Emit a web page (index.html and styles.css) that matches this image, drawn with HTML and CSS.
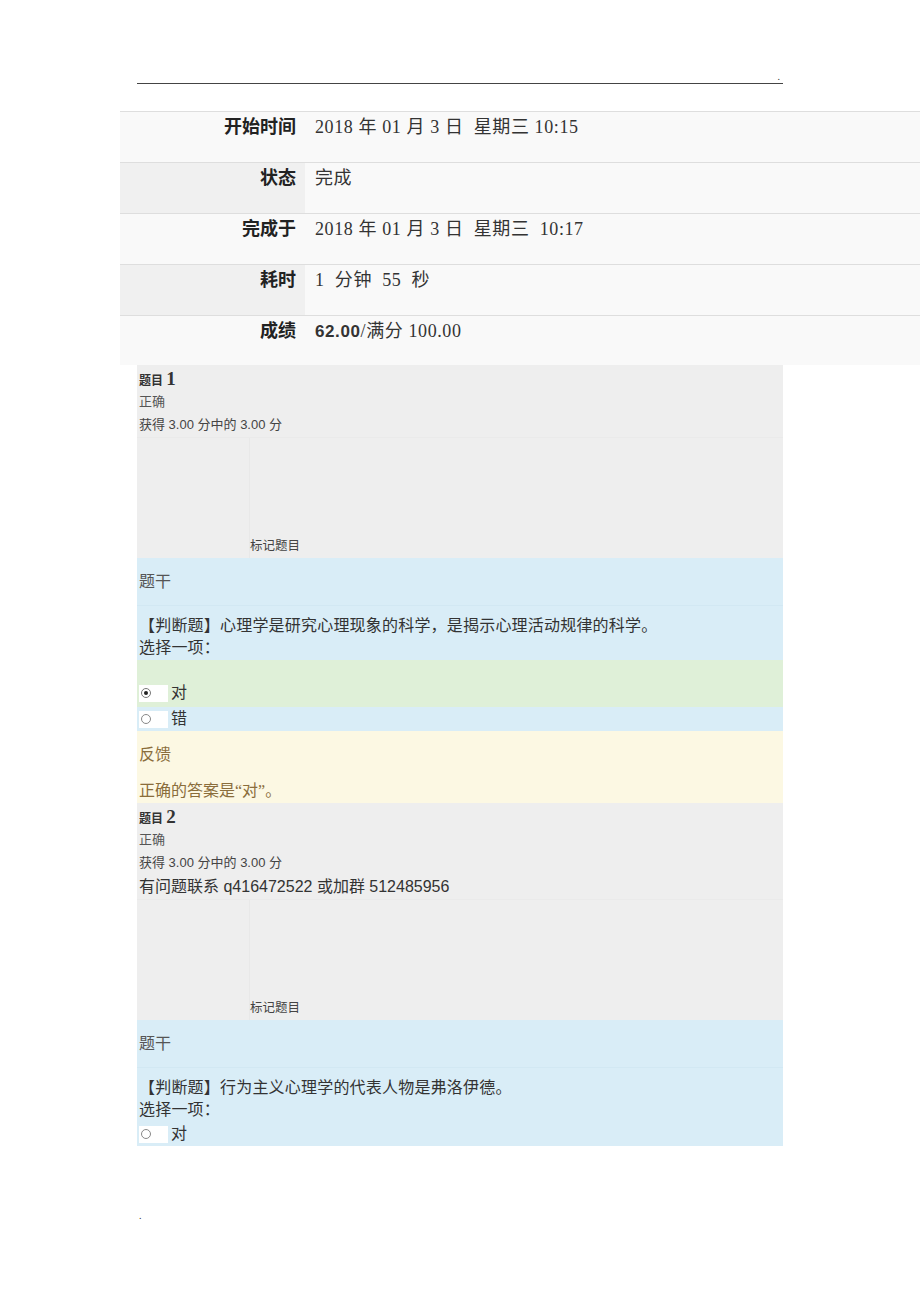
FILE: index.html
```html
<!DOCTYPE html>
<html lang="zh-CN">
<head>
  <meta charset="UTF-8">
  <meta name="viewport" content="width=device-width, initial-scale=1.0">
  <title>测验回顾</title>
  <link rel="stylesheet" href="styles.css">
</head>
<body>
  <div class="page-head"><span class="dot">.</span></div>

  <div class="summary">
    <div class="summary-row">
      <div class="cell-label">开始时间</div>
      <div class="cell-value">2018 年 01 月 3 日&nbsp; 星期三 10:15</div>
    </div>
    <div class="summary-row alt">
      <div class="cell-label">状态</div>
      <div class="cell-value">完成</div>
    </div>
    <div class="summary-row">
      <div class="cell-label">完成于</div>
      <div class="cell-value">2018 年 01 月 3 日&nbsp; 星期三&nbsp; 10:17</div>
    </div>
    <div class="summary-row alt">
      <div class="cell-label">耗时</div>
      <div class="cell-value">1&nbsp; 分钟&nbsp; 55&nbsp; 秒</div>
    </div>
    <div class="summary-row last">
      <div class="cell-label">成绩</div>
      <div class="cell-value"><b>62.00</b>/满分 100.00</div>
    </div>
  </div>

  <div class="que">
    <div class="info">
      <div class="qno">题目 <b>1</b></div>
      <div class="state">正确</div>
      <div class="grade">获得 3.00 分中的 3.00 分</div>
      <div class="flag-area">
        <div class="flag">标记题目</div>
      </div>
    </div>
    <div class="content">
      <div class="prompt-head">题干</div>
      <div class="qtext">
        <div>【判断题】心理学是研究心理现象的科学，是揭示心理活动规律的科学。</div>
        <div>选择一项：</div>
      </div>
    </div>
    <div class="opt correct">
      <span class="radio">
        <svg width="12" height="12" viewBox="0 0 12 12"><circle cx="6" cy="6" r="4.5" fill="#fff" stroke="#777" stroke-width="1"/><circle cx="6" cy="6" r="2" fill="#222"/></svg>
      </span>对
    </div>
    <div class="opt">
      <span class="radio">
        <svg width="12" height="12" viewBox="0 0 12 12"><circle cx="6" cy="6" r="4.5" fill="#fff" stroke="#888" stroke-width="1"/></svg>
      </span>错
    </div>
    <div class="feedback">
      <div class="fb-head">反馈</div>
      <div class="fb-text">正确的答案是“对”。</div>
    </div>
  </div>

  <div class="que">
    <div class="info">
      <div class="qno">题目 <b>2</b></div>
      <div class="state">正确</div>
      <div class="grade">获得 3.00 分中的 3.00 分</div>
      <div class="contact">有问题联系 q416472522 或加群 512485956</div>
      <div class="flag-area">
        <div class="flag">标记题目</div>
      </div>
    </div>
    <div class="content">
      <div class="prompt-head">题干</div>
      <div class="qtext">
        <div>【判断题】行为主义心理学的代表人物是弗洛伊德。</div>
        <div>选择一项：</div>
      </div>
      <div class="opt plain">
        <span class="radio">
          <svg width="12" height="12" viewBox="0 0 12 12"><circle cx="6" cy="6" r="4.5" fill="#fff" stroke="#888" stroke-width="1"/></svg>
        </span>对
      </div>
    </div>
  </div>

  <div class="page-foot">.</div>
</body>
</html>
```

FILE: styles.css
```css
body {
  margin: 0;
  padding: 0;
  background: #fff;
  color: #333;
  font-family: "Liberation Serif", "Noto Sans CJK SC", serif;
}
.page-head {
  width: 646px;
  height: 83px;
  margin-left: 137px;
  border-bottom: 1px solid #444;
  display: flex;
  justify-content: flex-end;
  align-items: flex-end;
}
.page-head .dot {
  font-size: 10px;
  line-height: 8px;
  padding-right: 3px;
  padding-bottom: 2px;
  color: #333;
}
.summary {
  margin-left: 120px;
  margin-top: 27px;
}
.summary-row {
  display: grid;
  grid-template-columns: 185px 1fr;
  height: 50px;
  border-top: 1px solid #dedede;
  background: #f9f9f9;
}
.summary-row.last {
  height: 49px;
}
.summary-row.alt .cell-label {
  background: #f0f0f0;
}
.cell-label {
  text-align: right;
  padding: 5px 9px 0 0;
  font-family: "Liberation Sans", "Noto Sans CJK SC", sans-serif;
  font-weight: bold;
  font-size: 18px;
  line-height: 20px;
  color: #222;
}
.cell-value {
  padding: 5px 0 0 10px;
  font-size: 18px;
  line-height: 20px;
  letter-spacing: 0.6px;
  color: #333;
}
.cell-value b {
  font-family: "Liberation Sans", "Noto Sans CJK SC", sans-serif;
  font-size: 17px;
}
.que {
  width: 646px;
  margin-left: 137px;
}
.info {
  background: #eeeeee;
  padding-left: 2px;
  font-family: "Liberation Sans", "Noto Sans CJK SC", sans-serif;
}
.qno {
  height: 25px;
  line-height: 27px;
  font-size: 12px;
  font-weight: bold;
  color: #333;
}
.qno b {
  font-family: "Liberation Serif", serif;
  font-size: 19px;
}
.state {
  height: 23px;
  line-height: 23px;
  font-size: 13px;
  color: #555;
}
.grade {
  height: 24px;
  line-height: 24px;
  font-size: 13px;
  color: #444;
}
.contact {
  height: 24px;
  line-height: 24px;
  font-size: 16px;
  color: #333;
}
.flag-area {
  height: 121px;
  display: flex;
  align-items: flex-end;
  border-top: 1px solid #eaeaea;
  margin-left: -2px;
  box-sizing: border-box;
}
.flag {
  margin-left: 112px;
  height: 100%;
  box-sizing: border-box;
  border-left: 1px solid #e8e8e8;
  display: flex;
  align-items: flex-end;
  padding-bottom: 2px;
  font-size: 12.5px;
  line-height: 20px;
  color: #444;
}
.content {
  background: #d9edf7;
}
.prompt-head {
  padding: 12px 2px 11px;
  font-size: 16px;
  line-height: 24px;
  color: #555;
  border-bottom: 1px solid #d2e8f3;
}
.qtext {
  padding: 9px 2px 1px;
  font-size: 16px;
  line-height: 22px;
  letter-spacing: 0.2px;
  color: #333;
}
.opt {
  background: #d9edf7;
  padding-left: 2px;
  font-size: 16px;
  line-height: 24px;
  height: 24px;
  color: #333;
  display: flex;
  align-items: center;
}
.opt.correct {
  background: #dff0d8;
  height: 22px;
  padding-top: 22px;
  padding-bottom: 3px;
  line-height: 22px;
}
.radio {
  display: inline-flex;
  align-items: center;
  width: 28px;
  height: 17px;
  margin-right: 3px;
  padding-left: 1px;
  background: #fff;
}
.feedback {
  background: #fcf8e3;
  padding: 12px 2px 0;
  color: #8a6d3b;
  font-size: 16px;
  line-height: 24px;
}
.fb-head {
  margin-bottom: 12px;
}
.page-foot {
  margin: 64px 0 0 139px;
  font-size: 10px;
  color: #333;
}
```
